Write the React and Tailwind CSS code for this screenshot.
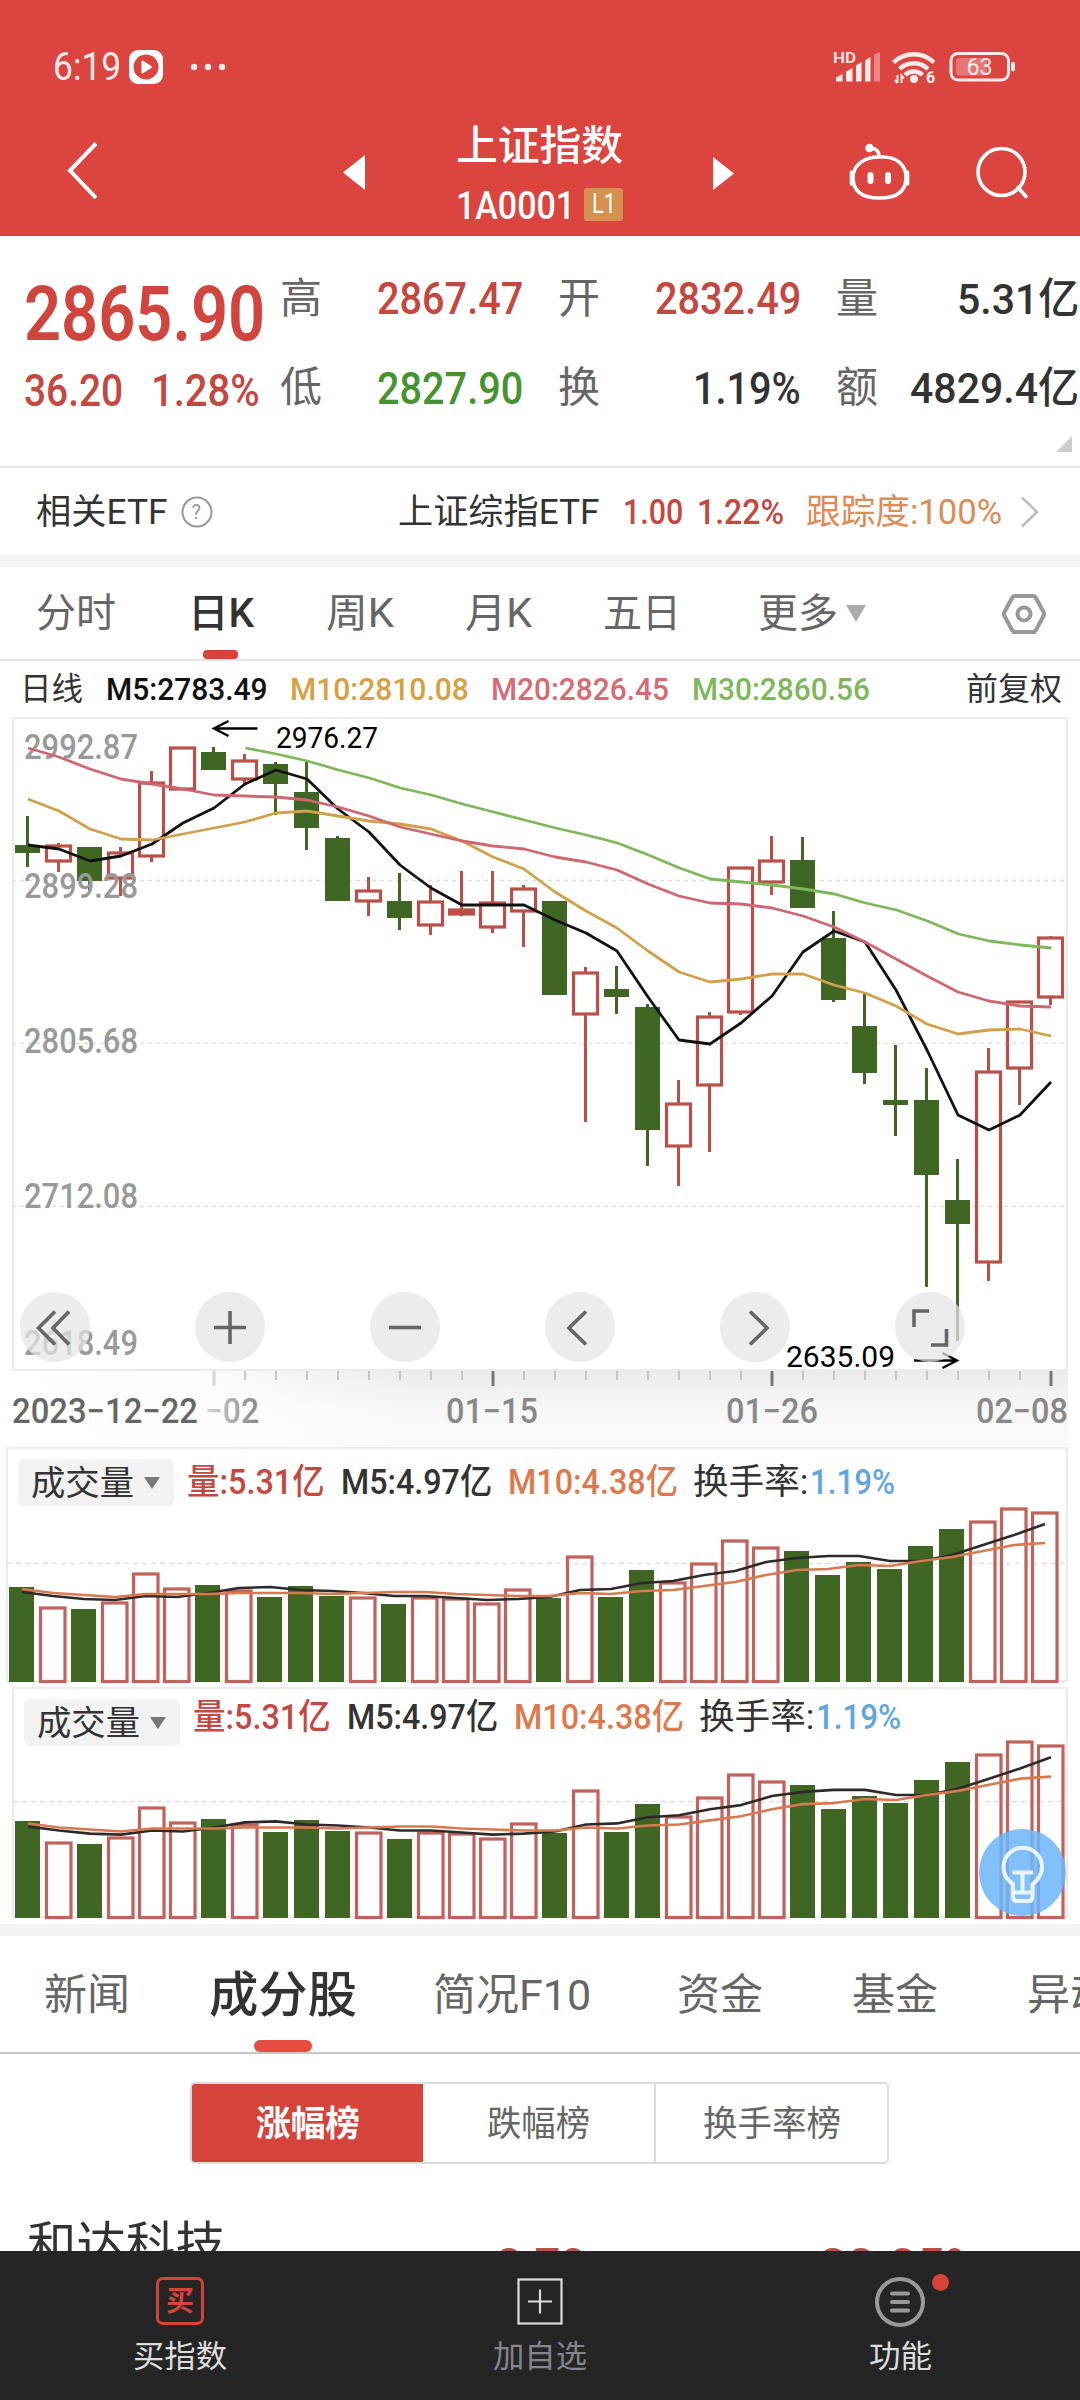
import { useLayoutEffect, useRef, useState } from 'react';
import clsx from 'clsx';

const UP = '#b9514a';
const DOWN = '#3f6623';
const STEP = 31;

// [up, body top, body bottom, high, low]
const candles = [
  [0, 845, 853, 816, 867], [1, 846, 861, 843, 872], [0, 847, 881, 847, 891], [1, 853, 878, 847, 896],
  [1, 783, 856, 771, 862], [1, 748, 789, 748, 790], [0, 752, 770, 747, 770], [1, 761, 779, 754, 784],
  [0, 764, 784, 762, 815], [0, 792, 828, 762, 850], [0, 838, 901, 836, 901], [1, 891, 901, 877, 916],
  [0, 901, 918, 873, 930], [1, 902, 925, 885, 935], [1, 910, 914, 871, 916], [1, 903, 927, 871, 933],
  [1, 889, 911, 885, 947], [0, 901, 995, 901, 995], [1, 973, 1014, 967, 1122], [0, 989, 997, 966, 1014],
  [0, 1007, 1130, 1004, 1166], [1, 1104, 1146, 1080, 1186], [1, 1017, 1085, 1012, 1152], [1, 868, 1012, 867, 1015],
  [1, 861, 882, 836, 895], [0, 860, 908, 837, 908], [0, 938, 1000, 911, 1002], [0, 1026, 1073, 994, 1084],
  [0, 1100, 1105, 1045, 1136], [0, 1100, 1175, 1068, 1287], [0, 1200, 1224, 1159, 1341], [1, 1072, 1262, 1048, 1281],
  [1, 1002, 1068, 1001, 1105], [1, 938, 997, 936, 1005],
];

const ma5 = [845, 849, 861, 856, 844, 823, 808, 784, 770, 779, 809, 832, 865, 888, 905, 905, 905, 920, 933, 951, 997, 1040, 1044, 1023, 996, 952, 931, 942, 990, 1050, 1115, 1130, 1115, 1082];
const ma10 = [799, 811, 829, 839, 840, 834, 828, 822, 813, 811, 816, 821, 824, 829, 841, 857, 869, 892, 911, 928, 951, 972, 982, 979, 974, 974, 985, 993, 1006, 1024, 1034, 1030, 1029, 1036];
const ma20 = [748, 757, 769, 779, 784, 789, 795, 796, 797, 800, 807, 816, 827, 834, 841, 846, 849, 857, 862, 870, 884, 896, 903, 904, 908, 916, 927, 942, 959, 976, 992, 1001, 1006, 1007];
const ma30 = [748, 754, 761, 770, 778, 788, 795, 804, 812, 820, 828, 835, 843, 855, 868, 879, 882, 885, 889, 894, 903, 910, 921, 934, 941, 945, 948];

// heights above the baseline of the volume pane
const volumes = [95, 75, 73, 80, 109, 94, 97, 92, 85, 96, 86, 85, 78, 85, 84, 79, 93, 84, 126, 85, 112, 100, 119, 142, 135, 131, 107, 120, 113, 136, 153, 161, 174, 170];
const vol5 = [90, 86, 83, 82, 86, 85, 89, 94, 95, 92, 91, 89, 86, 86, 84, 82, 83, 85, 92, 93, 99, 101, 107, 111, 120, 124, 126, 126, 121, 121, 127, 137, 147, 158];
const vol10 = [93, 89, 87, 85, 88, 88, 88, 89, 89, 89, 88, 89, 90, 90, 88, 87, 86, 86, 89, 88, 91, 92, 96, 100, 107, 112, 113, 117, 116, 121, 125, 131, 137, 139];

// Stretches or squeezes one line of text to the width of its box
function Fit({ className, children }) {
  const box = useRef(null);
  const text = useRef(null);
  const [scale, setScale] = useState(1);

  useLayoutEffect(() => {
    setScale(box.current.offsetWidth / text.current.offsetWidth);
  }, [children]);

  return (
    <span ref={box} className={clsx('block shrink-0 leading-none', className)}>
      <span
        ref={text}
        className="inline-block origin-left whitespace-nowrap"
        style={{ transform: `scaleX(${scale})` }}
      >
        {children}
      </span>
    </span>
  );
}

function Line({ points, start = 0, x0, color, width = 2.8 }) {
  const pts = points.map((y, i) => `${x0 + (i + start) * STEP},${y}`).join(' ');
  return <polyline points={pts} fill="none" stroke={color} strokeWidth={width} strokeLinejoin="round" />;
}

function SvgLabel({ x, y, w, size = 35, color = '#999', weight = 500, children }) {
  return (
    <text x={x} y={y} fontSize={size} fill={color} fontWeight={weight} textLength={w} lengthAdjust="spacingAndGlyphs">
      {children}
    </text>
  );
}

function StatusBar() {
  return (
    <div className="flex h-[84px] items-end pl-[53px] text-[#fdeaea]">
      <Fit className="mb-[-2px] w-[68px] text-[38px]">6:19</Fit>
      <svg className="ml-[8px]" width="34" height="34" viewBox="0 0 34 34">
        <rect width="34" height="34" rx="9" fill="#fff" />
        <circle cx="17" cy="17" r="12.5" fill="#dc4440" />
        <path d="M13.5 11.5v11l8.5-5.5z" fill="#fff" stroke="#fff" strokeWidth="2" strokeLinejoin="round" />
      </svg>
      <svg className="mb-[13px] ml-[27px]" width="36" height="8">
        <circle cx="4" cy="4" r="3.2" fill="#fdeaea" />
        <circle cx="18" cy="4" r="3.2" fill="#fdeaea" />
        <circle cx="32" cy="4" r="3.2" fill="#fdeaea" />
      </svg>
      <svg className="ml-[604px]" width="190" height="38" viewBox="830 46 190 38" fill="#fdeaea">
        <text x="833" y="63" fontSize="15" fontWeight="600" textLength="23" lengthAdjust="spacingAndGlyphs">HD</text>
        <path d="M836 77.500L842.500 74v7.500H836z" />
        <path d="M846 71.500L852.500 68v13.500H846z" />
        <path d="M856 65.500L861.500 62v19.500H856z" />
        <path d="M865 60.500L870.500 57v24.500H865z" />
        <path d="M874 54.500L880 52v29.500H874z" opacity=".4" />
        <g fill="none" stroke="#fdeaea" strokeWidth="4.400">
          <path d="M893.500 62.500a29 29 0 0 1 40.500 0" />
          <path d="M899.500 69a20.500 20.500 0 0 1 28.500 0" />
          <path d="M905 75a12.500 12.500 0 0 1 17.500 0" />
        </g>
        <circle cx="914" cy="79" r="4" />
        <path d="M897.500 75v8M895 80l2.500 3M901.500 83v-7.500l2.500 3" stroke="#fdeaea" strokeWidth="2" fill="none" />
        <text x="926" y="83" fontSize="16" fontWeight="800">6</text>
        <rect x="951" y="53.500" width="57.500" height="26.500" rx="7" fill="none" stroke="#fdeaea" strokeWidth="3" />
        <rect x="956" y="58" width="31" height="17.500" rx="3" opacity=".3" />
        <rect x="1011" y="62" width="4" height="9.500" rx="2" />
        <text x="966.500" y="75" fontSize="23.500" textLength="26" lengthAdjust="spacingAndGlyphs">63</text>
      </svg>
    </div>
  );
}

function Header() {
  return (
    <header className="h-[236px] bg-[#dc4440] text-white">
      <StatusBar />
      <div className="flex h-[152px] pl-[66px]">
        <svg className="mt-[57px]" width="34" height="60" fill="none" stroke="#fff" strokeWidth="4">
          <path d="M30 2.500L4 29.500L30 57" />
        </svg>
        <svg className="mt-[71px] ml-[243px]" width="22" height="35"><path d="M22 0v35L0 17.500z" fill="#fff" /></svg>
        <div className="ml-[91px] w-[167px]">
          <Fit className="mt-[42px] w-[167px] text-[41px] font-medium">上证指数</Fit>
          <div className="mt-[20px] flex items-center">
            <Fit className="w-[119px] text-[38px] font-medium">1A0001</Fit>
            <div className="mt-[-4px] ml-[9px] flex h-[33px] w-[40px] items-center justify-center rounded-[3px] bg-[#d69050]">
              <Fit className="w-[24px] text-[27px]">L1</Fit>
            </div>
          </div>
        </div>
        <svg className="mt-[73px] ml-[90px]" width="22" height="33"><path d="M0 0v33l21-16.500z" fill="#fff" /></svg>
        <svg className="mt-[58px] ml-[113px]" width="64" height="60" viewBox="848 142 64 60" fill="none" stroke="#fff" strokeWidth="3.600">
          <path d="M879 157h4c14 0 23 8 23 20.500S898 198 879.500 198S853 190 853 177.500S864 157 879 157z" />
          <path d="M879 157c0-6-3-9-9-8.500" />
          <circle cx="869.500" cy="148" r="2.500" fill="#fff" />
          <path d="M851.500 172v12M907.500 172v12" strokeLinecap="round" />
          <path d="M870.500 175v6M888 175v6" strokeWidth="6" strokeLinecap="round" />
        </svg>
        <svg className="mt-[61px] ml-[63px]" width="56" height="56" fill="none" stroke="#fff" strokeWidth="3.600">
          <circle cx="26.500" cy="27" r="23.500" />
          <path d="M43 42.500L51 51.500" strokeLinecap="round" />
        </svg>
      </div>
    </header>
  );
}

function Quote() {
  return (
    <section className="relative flex h-[232px] border-b-2 border-[#e8e8e8]">
      <div className="ml-[24px] w-[241px] text-[#d0453e]">
        <Fit className="mt-[40px] w-[241px] text-[76px] font-semibold">2865.90</Fit>
        <div className="mt-[17px] flex">
          <Fit className="w-[99px] text-[44px] font-medium text-[#c4483f]">36.20</Fit>
          <Fit className="ml-[28px] w-[109px] text-[44px] font-medium text-[#c4483f]">1.28%</Fit>
        </div>
      </div>
      <div className="mt-[42px] ml-[15px] flex flex-col gap-[47px] text-[#666]">
        <Fit className="w-[42px] text-[42px]">高</Fit>
        <Fit className="w-[42px] text-[42px]">低</Fit>
      </div>
      <div className="mt-[41px] ml-[55px] flex flex-col gap-[46px] font-medium text-[#c4483f]">
        <Fit className="w-[146px] text-[44px]">2867.47</Fit>
        <Fit className="w-[146px] text-[44px] text-[#469332]">2827.90</Fit>
      </div>
      <div className="mt-[42px] ml-[35px] flex flex-col gap-[47px] text-[#666]">
        <Fit className="w-[42px] text-[42px]">开</Fit>
        <Fit className="w-[42px] text-[42px]">换</Fit>
      </div>
      <div className="mt-[41px] ml-[55px] flex flex-col items-end gap-[46px] font-medium text-[#c4483f]">
        <Fit className="w-[146px] text-[44px]">2832.49</Fit>
        <Fit className="w-[108px] text-[44px] text-[#333]">1.19%</Fit>
      </div>
      <div className="mt-[42px] ml-[35px] flex flex-col gap-[47px] text-[#666]">
        <Fit className="w-[42px] text-[42px]">量</Fit>
        <Fit className="w-[42px] text-[42px]">额</Fit>
      </div>
      <div className="mt-[42px] ml-[32px] flex flex-col items-end gap-[46px] font-medium text-[#333]">
        <Fit className="w-[122px] text-[43px]">5.31亿</Fit>
        <Fit className="w-[169px] text-[43px]">4829.4亿</Fit>
      </div>
      <svg className="absolute right-[8px] bottom-[14px]" width="16" height="16"><path d="M16 0v16H0z" fill="#ccc" /></svg>
    </section>
  );
}

function EtfRow() {
  return (
    <section className="flex h-[87px] items-center pl-[36px] text-[#333]">
      <Fit className="mt-[2px] w-[131px] text-[35px]">相关ETF</Fit>
      <svg className="ml-[13px]" width="34" height="34" fill="none" stroke="#999" strokeWidth="2">
        <circle cx="17" cy="17" r="14.500" />
        <text x="11.500" y="24" fontSize="20" fill="#999" stroke="none">?</text>
      </svg>
      <Fit className="mt-[2px] ml-[184px] w-[201px] text-[35px]">上证综指ETF</Fit>
      <Fit className="mt-[2px] ml-[24px] w-[60px] text-[35px] font-medium text-[#c4483f]">1.00</Fit>
      <Fit className="mt-[2px] ml-[14px] w-[87px] text-[35px] font-medium text-[#c4483f]">1.22%</Fit>
      <Fit className="mt-[2px] ml-[22px] w-[196px] text-[35px] text-[#de8b57]">跟踪度:100%</Fit>
      <svg className="ml-[18px]" width="20" height="32" fill="none" stroke="#bbb" strokeWidth="2.500"><path d="M2 1.500L17 16L2 30.500" /></svg>
    </section>
  );
}

function PeriodTabs() {
  return (
    <nav className="flex h-[94px] border-b-2 border-[#e8e8e8] pl-[36px] text-[40px] text-[#666]">
      <Fit className="mt-[27px] w-[80px]">分时</Fit>
      <div className="ml-[72px] flex flex-col items-center justify-between text-[#333]">
        <Fit className="mt-[27px] w-[66px] font-medium">日K</Fit>
        <div className="mr-[2px] h-[9px] w-[35px] rounded-[4px] bg-[#d5433b]" />
      </div>
      <Fit className="mt-[27px] ml-[72px] w-[68px]">周K</Fit>
      <Fit className="mt-[27px] ml-[71px] w-[67px]">月K</Fit>
      <Fit className="mt-[27px] ml-[71px] w-[78px]">五日</Fit>
      <Fit className="mt-[27px] ml-[77px] w-[80px]">更多</Fit>
      <svg className="mt-[38px] ml-[8px]" width="20" height="17"><path d="M0 0h20l-10 17z" fill="#aaa" /></svg>
      <svg className="mt-[26px] ml-[136px]" width="44" height="42" fill="none" stroke="#999" strokeWidth="4">
        <path d="M13 3h18q2 0 3 2l7.500 14q1 2 0 4L34 37q-1 2-3 2H13q-2 0-3-2L2.500 23q-1-2 0-4L10 5q1-2 3-2z" />
        <circle cx="22" cy="21" r="6.500" />
      </svg>
    </nav>
  );
}

function MaLegend() {
  return (
    <div className="flex h-[56px] pt-[12px] pl-[20px] text-[32px] font-medium">
      <Fit className="w-[63px] font-normal text-[#333]">日线</Fit>
      <Fit className="ml-[23px] w-[162px] text-[#111]">M5:2783.49</Fit>
      <Fit className="ml-[22px] w-[179px] text-[#d6a043]">M10:2810.08</Fit>
      <Fit className="ml-[22px] w-[178px] text-[#d66a75]">M20:2826.45</Fit>
      <Fit className="ml-[23px] w-[178px] text-[#7fb75b]">M30:2860.56</Fit>
      <Fit className="ml-[96px] w-[96px] font-normal text-[#333]">前复权</Fit>
    </div>
  );
}

const chartButtons = [
  { id: 'start', d: 'M35 19.500L18.500 36L35 52.500M49 19.500L33 36L49 52.500' },
  { id: 'plus', d: 'M19 35.500H51M35 19v33' },
  { id: 'minus', d: 'M19 35.500H51' },
  { id: 'prev', d: 'M41 19.500L24 36L41 52.500' },
  { id: 'next', d: 'M30 19.500L47 36L30 52.500' },
  { id: 'full', d: 'M34 19H19v16M51.500 37v16H36' },
];

function KlineChart() {
  const x0 = 27.5;
  return (
    <section className="relative h-[729px]">
      <svg width="1080" height="729" viewBox="0 717 1080 729" fontFamily="Roboto">
        <defs>
          <linearGradient id="axisShade" x1="0" y1="0" x2="0" y2="1">
            <stop offset="0" stopColor="#ebebeb" />
            <stop offset=".5" stopColor="#f7f7f7" />
            <stop offset="1" stopColor="#fafafa" />
          </linearGradient>
          <linearGradient id="axisFade">
            <stop offset="0" stopColor="#fff" />
            <stop offset=".5" stopColor="#fff" stopOpacity=".8" />
            <stop offset="1" stopColor="#fff" stopOpacity="0" />
          </linearGradient>
          <linearGradient id="dateFade" gradientUnits="userSpaceOnUse" x1="200" y1="0" x2="258" y2="0">
            <stop offset="0" stopColor="#ddd" />
            <stop offset="1" stopColor="#888" />
          </linearGradient>
        </defs>
        <rect x="13" y="1371" width="1055" height="75" fill="url(#axisShade)" />
        <rect x="13" y="1371" width="400" height="75" fill="url(#axisFade)" />
        <rect x="13" y="718" width="1054" height="652" fill="none" stroke="#ebebeb" strokeWidth="2" />
        {[880, 1043, 1206].map((y) => (
          <path key={y} d={`M12 ${y + 0.5}H1066`} stroke="#dedede" strokeWidth="1.5" strokeDasharray="4 4" />
        ))}

        {candles.map(([up, top, bottom, high, low], i) => {
          const x = x0 + i * STEP;
          const color = up ? UP : DOWN;
          return (
            <g key={i} stroke={color}>
              <path d={`M${x} ${high}V${top}M${x} ${bottom}V${low}`} strokeWidth="3" />
              {up ? (
                <rect x={x - 12} y={top} width="24" height={bottom - top} fill={i === 14 ? '#d0453e' : 'none'} strokeWidth="3.2" />
              ) : (
                <rect x={x - 12.5} y={top} width="25" height={bottom - top} fill={color} stroke="none" />
              )}
            </g>
          );
        })}

        <SvgLabel x="24" y="759" w="114">2992.87</SvgLabel>
        <SvgLabel x="24" y="898" w="114">2899.28</SvgLabel>
        <SvgLabel x="24" y="1053" w="114">2805.68</SvgLabel>
        <SvgLabel x="24" y="1208" w="114">2712.08</SvgLabel>
        <SvgLabel x="24" y="1355" w="114">2618.49</SvgLabel>

        <Line points={ma30} start={7} x0={x0 + 1} color="#7fb75b" />
        <Line points={ma5} x0={x0 + 0.5} color="#111" />
        <Line points={ma10} x0={x0 + 0.5} color="#d2a04a" />
        <Line points={ma20} x0={x0 + 0.5} color="#cf6672" />

        <path d="M257.500 728.500H215M228.500 721L214 728.500L228.500 736" fill="none" stroke="#000" strokeWidth="2.4" />
        <SvgLabel x="276" y="747.5" w="102" size={30} color="#000" weight={400}>2976.27</SvgLabel>
        <path d="M914 1360.500H957M942.500 1353L957 1360.500L942.500 1368" fill="none" stroke="#000" strokeWidth="2.4" />
        <SvgLabel x="786" y="1367" w="109" size={30} color="#000" weight={400}>2635.09</SvgLabel>

        {Array.from({ length: 28 }, (_, n) => {
          const i = n + 6;
          const x = x0 + 0.5 + i * STEP;
          const major = (i - 6) % 9 === 0;
          return (
            <path
              key={i}
              d={`M${x} 1371v${major ? 15 : 9}`}
              stroke={i === 6 ? '#d6d6d6' : major ? '#777' : '#bbb'}
              strokeWidth={major ? 3 : 1.6}
            />
          );
        })}
        <SvgLabel x="12" y="1423" w="186" color="#666">2023−12−22</SvgLabel>
        <SvgLabel x="205" y="1423" w="54" color="url(#dateFade)">−02</SvgLabel>
        <SvgLabel x="446" y="1423" w="92" color="#888">01−15</SvgLabel>
        <SvgLabel x="726" y="1423" w="92" color="#888">01−26</SvgLabel>
        <SvgLabel x="976" y="1423" w="92" color="#888">02−08</SvgLabel>
      </svg>

      <div className="absolute top-[575px] left-[20px] flex gap-[105px]">
        {chartButtons.map(({ id, d }) => (
          <button key={id} className="size-[70px] rounded-full bg-[#dadada]/50">
            <svg width="70" height="72" fill="none" stroke="#666" strokeWidth="3.6">
              <circle cx="35" cy="35" r="35" fill="#ededed" fillOpacity=".45" stroke="none" />
              <path d={d} />
            </svg>
          </button>
        ))}
      </div>
    </section>
  );
}

function VolumePane({ left, height, top, base, grid, scale = 1 }) {
  const x0 = left + 14.5;
  return (
    <svg className="absolute inset-0" width="1080" height={height}>
      <rect x={left} y={top} width={1067 - left} height={base - top} fill="none" stroke="#ebebeb" strokeWidth="2" />
      <path d={`M${left} ${grid}.5H1066`} stroke="#dedede" strokeWidth="1.5" strokeDasharray="5 4" />
      {volumes.map((v, i) => {
        const x = x0 + i * STEP;
        const h = Math.round(v * scale);
        return candles[i][0] ? (
          <rect key={i} x={x - 12} y={base + 2 - h} width="24.500" height={h - 1.5} fill="none" stroke="#c1625c" strokeWidth="3.2" />
        ) : (
          <rect key={i} x={x - 12.5} y={base + 1 - h} width="25" height={h} fill={DOWN} />
        );
      })}
      <Line points={vol5.map((v) => base + 1 - v * scale)} x0={x0 + 0.5} color="#2e2a2a" width={2.6} />
      <Line points={vol10.map((v) => base + 1 - v * scale)} x0={x0 + 0.5} color="#d9794f" width={2.6} />
    </svg>
  );
}

function VolumeLegend({ className, pill }) {
  return (
    <div className={clsx('relative flex text-[35px] font-medium', className)}>
      <div className={clsx('flex h-[47px] w-[156px] items-center rounded-[6px] bg-[#f2f2f2] pl-[13px] text-[#333]', pill)}>
        <Fit className="mt-[1px] w-[103px] text-[34px] font-normal">成交量</Fit>
        <svg className="ml-[10px]" width="16" height="12"><path d="M0 0h16L8 12z" fill="#777" /></svg>
      </div>
      <Fit className="mt-[6px] ml-[13px] w-[138px] text-[#c4483f]">量:5.31亿</Fit>
      <Fit className="mt-[6px] ml-[16px] w-[151px] text-[#333]">M5:4.97亿</Fit>
      <Fit className="mt-[6px] ml-[16px] w-[170px] text-[#dc7a4d]">M10:4.38亿</Fit>
      <Fit className="mt-[6px] ml-[15px] w-[115px] font-normal text-[#333]">换手率:</Fit>
      <Fit className="mt-[6px] ml-[2px] w-[85px] text-[#63a6dd]">1.19%</Fit>
    </div>
  );
}

function Volumes() {
  return (
    <>
      <section className="relative h-[240px]">
        <VolumePane left={7} height={240} top={2} base={235} grid={117} />
        <VolumeLegend className="pt-[13px] pl-[18px]" />
      </section>
      <section className="relative h-[238px]">
        <VolumePane left={13} height={238} top={2} base={231} grid={115} scale={1.017} />
        <VolumeLegend className="pt-[8px] pl-[24px]" pill="mt-[5px]" />
        <button className="absolute right-[14px] bottom-[8px]">
          <svg width="87" height="87" viewBox="0 0 87 87" fill="none" stroke="#eaf6ff" strokeWidth="4">
            <circle cx="43.500" cy="43.500" r="43.500" fill="#6db6fa" fillOpacity=".86" stroke="none" />
            <path d="M34 61V55C28 51 24.500 45 24.500 38A19 19 0 0 1 63 38C63 45 59 51 53.500 55V68q0 4-4 4H38q-4 0-4-4V61M34 63.500H53.500M43.500 44V63M33.500 43.500H54" strokeLinejoin="round" />
          </svg>
        </button>
      </section>
    </>
  );
}

function NewsTabs() {
  return (
    <nav className="flex h-[118px] overflow-hidden border-b-2 border-[#c8c8c8] pl-[44px] text-[43px] text-[#666]">
      <Fit className="mt-[38px] w-[86px]">新闻</Fit>
      <div className="ml-[79px] flex flex-col items-center justify-between text-[#333]">
        <Fit className="mt-[35px] w-[148px] text-[49px] font-medium">成分股</Fit>
        <div className="h-[12px] w-[58px] rounded-[6px] bg-[#e84c40]" />
      </div>
      <Fit className="mt-[38px] ml-[76px] w-[158px]">简况F10</Fit>
      <Fit className="mt-[38px] ml-[86px] w-[86px]">资金</Fit>
      <Fit className="mt-[38px] ml-[89px] w-[86px]">基金</Fit>
      <Fit className="mt-[38px] ml-[89px] w-[86px]">异动</Fit>
    </nav>
  );
}

function RankList() {
  return (
    <section className="h-[197px] overflow-hidden">
      <div className="mt-[28px] ml-[190px] flex h-[82px] w-[699px] overflow-hidden rounded-[5px] border-2 border-[#dcdcdc] text-[35px] text-[#666]">
        <div className="flex flex-1 items-center justify-center bg-[#d5433b] pt-[2px] text-white">
          <Fit className="w-[104px] font-bold">涨幅榜</Fit>
        </div>
        <div className="flex flex-1 items-center justify-center pt-[2px]">
          <Fit className="w-[103px]">跌幅榜</Fit>
        </div>
        <div className="flex flex-1 items-center justify-center border-l-2 border-[#dcdcdc] pt-[2px]">
          <Fit className="w-[138px]">换手率榜</Fit>
        </div>
      </div>
      <div className="mt-[57px] flex pl-[27px]">
        <Fit className="w-[198px] text-[49px] text-[#333]">和达科技</Fit>
        <Fit className="mt-[20px] ml-[271px] w-[90px] text-[49px] font-medium text-[#b9514a]">8.70</Fit>
        <Fit className="mt-[20px] ml-[233px] w-[162px] text-[49px] font-medium text-[#b9514a]">20.05%</Fit>
      </div>
    </section>
  );
}

function BottomBar() {
  return (
    <footer className="grid h-[149px] grid-cols-3 bg-[#252525] text-[31px] text-[#ddd]">
      <div className="flex flex-col items-center pt-[26px]">
        <div className="flex size-[48px] items-center justify-center rounded-[7px] border-[3px] border-[#d5433b] text-[#d5433b]">
          <Fit className="mt-[1px] w-[28px] text-[28px] font-bold">买</Fit>
        </div>
        <Fit className="mt-[16px] w-[94px]">买指数</Fit>
      </div>
      <div className="flex flex-col items-center pt-[27px]">
        <svg width="46" height="47" fill="none" stroke="#ddd" strokeWidth="2.200">
          <rect x="1.500" y="1.500" width="43" height="44" />
          <path d="M11 23.500H35M23 11.500v24" />
        </svg>
        <Fit className="mt-[16px] w-[94px] text-[#85858f]">加自选</Fit>
      </div>
      <div className="relative flex flex-col items-center pt-[25px]">
        <svg width="52" height="52" fill="none" stroke="#999" strokeWidth="4">
          <circle cx="26" cy="26" r="23" />
          <path d="M18 17.500H34M18 26H34M18 34.500H34" strokeLinecap="round" />
        </svg>
        <div className="absolute top-[23px] left-[212px] size-[17px] rounded-full bg-[#d5433b]" />
        <Fit className="mt-[13px] w-[63px]">功能</Fit>
      </div>
    </footer>
  );
}

export default function App() {
  return (
    <div className="h-[2400px] w-[1080px] overflow-hidden bg-white font-[Roboto,'Noto_Sans_CJK_SC',sans-serif]">
      <Header />
      <Quote />
      <EtfRow />
      <div className="h-[12px] bg-[#f4f4f4]" />
      <PeriodTabs />
      <MaLegend />
      <KlineChart />
      <Volumes />
      <div className="h-[12px] bg-[#f4f4f4]" />
      <NewsTabs />
      <RankList />
      <BottomBar />
    </div>
  );
}
